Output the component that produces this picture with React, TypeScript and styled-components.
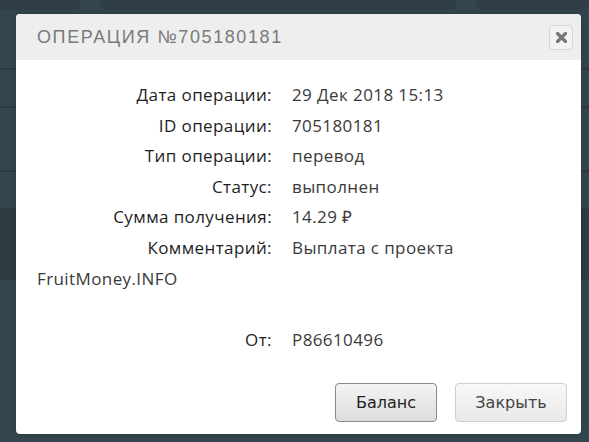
import React from 'react';
import styled, { createGlobalStyle } from 'styled-components';

const GlobalStyle = createGlobalStyle`
  html, body {
    margin: 0;
    padding: 0;
    background: #34464d;
    font-family: "Open Sans", "Liberation Sans", sans-serif;
  }
`;

const Page = styled.div`
  position: relative;
  width: 589px;
  height: 442px;
  overflow: hidden;
  background: #34464d;
`;

const Backdrop = styled.div`
  display: flex;
  flex-direction: column;
`;

const TopCards = styled.div`
  display: flex;
  gap: 20px;
  height: 10px;
`;

const Card = styled.div<{ $w?: number }>`
  flex: ${({ $w }) => ($w ? `0 0 ${$w}px` : '1')};
  background: #2f3f45;
  border-radius: 0 0 4px 4px;
`;

const Band = styled.div<{ $h: number; $dark?: boolean }>`
  height: ${({ $h }) => $h}px;
  border-bottom: 2px solid #2c3b41;
  background: ${({ $dark }) => ($dark ? '#2e3d43' : '#34464d')};
`;

const Overlay = styled.div`
  position: absolute;
  inset: 0;
  display: flex;
  align-items: flex-start;
  padding: 14px 0 0 16px;
`;

const Dialog = styled.div`
  width: 565px;
  height: 420px;
  background: #fff;
  border-radius: 4px;
  display: flex;
  flex-direction: column;
  overflow: hidden;
  box-shadow: 0 0 6px rgba(0, 0, 0, 0.25);
`;

const Header = styled.div`
  height: 46px;
  flex: 0 0 46px;
  background: #eeeeee;
  display: flex;
  align-items: center;
  justify-content: space-between;
  padding: 0 8px 0 21px;
`;

const Title = styled.h2`
  margin: 0;
  font-family: "Liberation Sans", sans-serif;
  font-weight: 400;
  font-size: 18px;
  letter-spacing: 1.6px;
  color: #7a7a7a;
  text-transform: uppercase;
`;

const CloseButton = styled.button`
  width: 24px;
  height: 25px;
  padding: 0;
  border: 1px solid #d6d6d6;
  border-radius: 4px;
  background: #f3f3f3;
  display: flex;
  align-items: center;
  justify-content: center;
  cursor: pointer;
`;

const Body = styled.div`
  flex: 1;
  padding: 20px 21px 0;
  font-size: 17px;
  letter-spacing: 0.4px;
  line-height: 30.6px;
  color: #3a3a3a;
`;

const Line = styled.div``;

const Label = styled.span`
  display: inline-block;
  width: 235px;
  margin-right: 20px;
  text-align: right;
  color: #1e1e1e;
`;

const Footer = styled.div`
  display: flex;
  justify-content: flex-end;
  gap: 18px;
  padding: 0 14px 12px;
`;

const Button = styled.button<{ $primary?: boolean }>`
  height: 39px;
  padding: 0;
  width: ${({ $primary }) => ($primary ? 102 : 112)}px;
  border-radius: 4px;
  border: 1px solid ${({ $primary }) => ($primary ? '#8a8a8a' : '#cfcfcf')};
  background: ${({ $primary }) =>
    $primary
      ? 'linear-gradient(#f4f4f4, #dcdcdc)'
      : 'linear-gradient(#f8f8f8, #e9e9e9)'};
  color: ${({ $primary }) => ($primary ? '#222' : '#444')};
  font-family: "DejaVu Sans", sans-serif;
  font-size: 16px;
  cursor: pointer;
`;

const rows: [string, React.ReactNode][] = [
  ['Дата операции:', '29 Дек 2018 15:13'],
  ['ID операции:', '705180181'],
  ['Тип операции:', 'перевод'],
  ['Статус:', 'выполнен'],
  ['Сумма получения:', '14.29 ₽'],
  ['Комментарий:', 'Выплата с проекта FruitMoney.INFO'],
];

export default function App() {
  return (
    <Page>
      <GlobalStyle />
      <Backdrop>
        <TopCards>
          <Card $w={80} />
          <Card $w={356} />
          <Card />
        </TopCards>
        <Band $h={58} />
        <Band $h={36} />
        <Band $h={62} />
        <Band $h={36} />
        <Band $h={68} $dark />
      </Backdrop>
      <Overlay>
        <Dialog>
          <Header>
            <Title>Операция №705180181</Title>
            <CloseButton aria-label="Закрыть">
              <svg width="11" height="11" viewBox="0 0 11 11">
                <path d="M1.5 1.5 L9.5 9.5 M9.5 1.5 L1.5 9.5" stroke="#777" strokeWidth="3.2" strokeLinecap="round" />
              </svg>
            </CloseButton>
          </Header>
          <Body>
            {rows.map(([k, v]) => (
              <Line key={k}>
                <Label>{k}</Label>
                {v}
              </Line>
            ))}
            <Line>&nbsp;</Line>
            <Line>
              <Label>От:</Label>
              P86610496
            </Line>
          </Body>
          <Footer>
            <Button $primary>Баланс</Button>
            <Button>Закрыть</Button>
          </Footer>
        </Dialog>
      </Overlay>
    </Page>
  );
}
